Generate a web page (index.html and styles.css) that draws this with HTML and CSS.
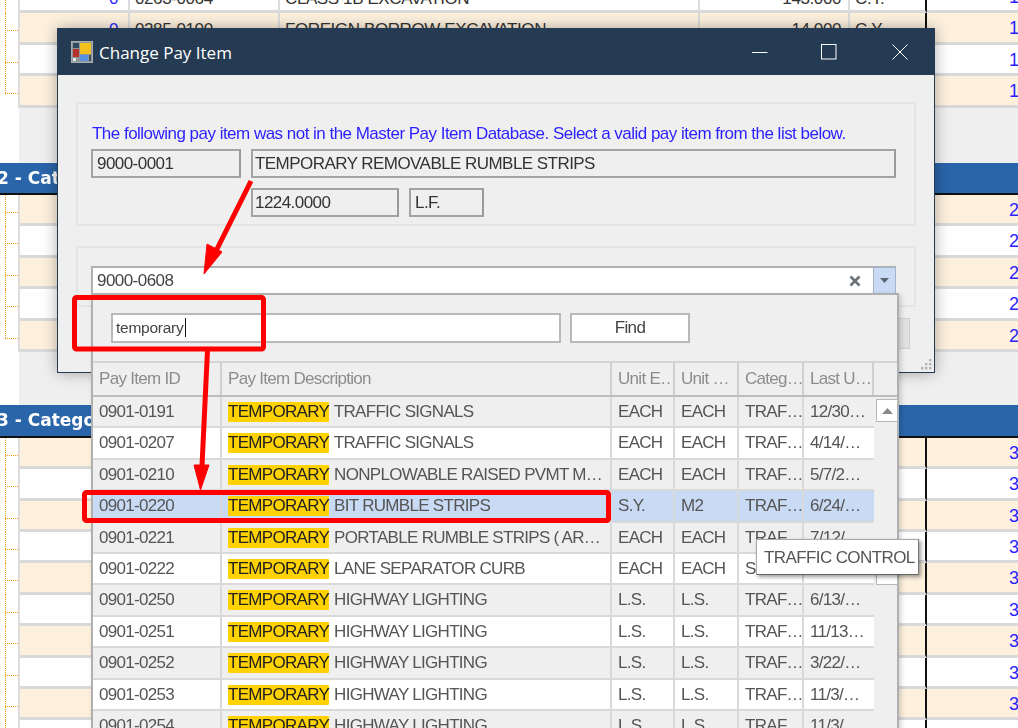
FILE: index.html
```html
<!DOCTYPE html>
<html lang="en">
<head>
<meta charset="utf-8">
<title>Change Pay Item</title>
<link rel="stylesheet" href="styles.css">
</head>
<body>
<div class="page">
  <main class="sheet">
    <section class="rows">
      <div class="row"><div class="tree"></div><div class="cell num">0</div><div class="cell">0263-0064</div><div class="cell">CLASS 1B EXCAVATION</div><div class="cell qty">143.000</div><div class="cell">C.Y.</div><div class="cell ref">1</div></div>
      <div class="row alt"><div class="tree"></div><div class="cell num">0</div><div class="cell">0285-0100</div><div class="cell">FOREIGN BORROW EXCAVATION</div><div class="cell qty">14.000</div><div class="cell">C.Y.</div><div class="cell ref">1</div></div>
      <div class="row"><div class="tree"></div><div class="cell num"></div><div class="cell"></div><div class="cell"></div><div class="cell qty"></div><div class="cell"></div><div class="cell ref">1</div></div>
      <div class="row alt"><div class="tree last"></div><div class="cell num"></div><div class="cell"></div><div class="cell"></div><div class="cell qty"></div><div class="cell"></div><div class="cell ref">1</div></div>
    </section>
    <div class="gap gap-a"></div>
    <h2 class="band band-a">2 - Category</h2>
    <section class="rows">
      <div class="row alt"><div class="tree"></div><div class="cell num"></div><div class="cell"></div><div class="cell"></div><div class="cell qty"></div><div class="cell"></div><div class="cell ref">2</div></div>
      <div class="row"><div class="tree"></div><div class="cell num"></div><div class="cell"></div><div class="cell"></div><div class="cell qty"></div><div class="cell"></div><div class="cell ref">2</div></div>
      <div class="row alt"><div class="tree"></div><div class="cell num"></div><div class="cell"></div><div class="cell"></div><div class="cell qty"></div><div class="cell"></div><div class="cell ref">2</div></div>
      <div class="row"><div class="tree"></div><div class="cell num"></div><div class="cell"></div><div class="cell"></div><div class="cell qty"></div><div class="cell"></div><div class="cell ref">2</div></div>
      <div class="row alt"><div class="tree last"></div><div class="cell num"></div><div class="cell"></div><div class="cell"></div><div class="cell qty"></div><div class="cell"></div><div class="cell ref">2</div></div>
    </section>
    <div class="gap gap-b"></div>
    <h2 class="band band-b">3 - Category</h2>
    <section class="rows">
      <div class="row alt"><div class="tree"></div><div class="cell num"></div><div class="cell"></div><div class="cell"></div><div class="cell qty"></div><div class="cell"></div><div class="cell ref">3</div></div>
      <div class="row"><div class="tree"></div><div class="cell num"></div><div class="cell"></div><div class="cell"></div><div class="cell qty"></div><div class="cell"></div><div class="cell ref">3</div></div>
      <div class="row alt"><div class="tree"></div><div class="cell num"></div><div class="cell"></div><div class="cell"></div><div class="cell qty"></div><div class="cell"></div><div class="cell ref">3</div></div>
      <div class="row"><div class="tree"></div><div class="cell num"></div><div class="cell"></div><div class="cell"></div><div class="cell qty"></div><div class="cell"></div><div class="cell ref">3</div></div>
      <div class="row alt"><div class="tree"></div><div class="cell num"></div><div class="cell"></div><div class="cell"></div><div class="cell qty"></div><div class="cell"></div><div class="cell ref">3</div></div>
      <div class="row"><div class="tree"></div><div class="cell num"></div><div class="cell"></div><div class="cell"></div><div class="cell qty"></div><div class="cell"></div><div class="cell ref">3</div></div>
      <div class="row alt"><div class="tree"></div><div class="cell num"></div><div class="cell"></div><div class="cell"></div><div class="cell qty"></div><div class="cell"></div><div class="cell ref">3</div></div>
      <div class="row"><div class="tree"></div><div class="cell num"></div><div class="cell"></div><div class="cell"></div><div class="cell qty"></div><div class="cell"></div><div class="cell ref">3</div></div>
      <div class="row alt"><div class="tree"></div><div class="cell num"></div><div class="cell"></div><div class="cell"></div><div class="cell qty"></div><div class="cell"></div><div class="cell ref">3</div></div>
      <div class="row"><div class="tree"></div><div class="cell num"></div><div class="cell"></div><div class="cell"></div><div class="cell qty"></div><div class="cell"></div><div class="cell ref">3</div></div>
    </section>
  </main>

  <div class="dialog">
    <header class="titlebar">
      <svg class="appicon" width="22" height="22" viewBox="0 0 22 22">
        <rect x="0.5" y="0.5" width="21" height="21" fill="#8f979c" stroke="#a8adb0"/>
        <rect x="2" y="2" width="6" height="5" fill="#2d4a5c"/>
        <rect x="9" y="2" width="11" height="11" fill="#f2c11c"/>
        <rect x="2" y="8" width="6" height="8" fill="#b5322c"/>
        <rect x="9" y="14" width="8" height="6" fill="#5a90e0"/>
        <rect x="2" y="17" width="3" height="3" fill="#e6e6e6"/>
        <rect x="18" y="14" width="2" height="6" fill="#3d4d58"/>
      </svg>
      <span class="wintitle">Change Pay Item</span>
      <div class="winbtn w-min"><svg width="16" height="16" viewBox="0 0 16 16"><path d="M0 8.5H15.5" stroke="#fff" fill="none"/></svg></div>
      <div class="winbtn w-max"><svg width="16" height="16" viewBox="0 0 16 16"><rect x="0.5" y="0.5" width="14.500" height="14.500" stroke="#fff" fill="none"/></svg></div>
      <div class="winbtn w-close"><svg width="16" height="16" viewBox="0 0 16 16"><path d="M0.5 0.5L15.5 15.5M15.5 0.5L0.5 15.5" stroke="#fff" fill="none"/></svg></div>
    </header>
    <div class="dlgbody">
      <fieldset class="group group-info">
        <p class="notice">The following pay item was not in the Master Pay Item Database. Select a valid pay item from the list below.</p>
        <div class="boxrow">
          <div class="box b-id">9000-0001</div>
          <div class="box b-desc">TEMPORARY REMOVABLE RUMBLE STRIPS</div>
        </div>
        <div class="boxrow boxrow-second">
          <div class="box b-qty">1224.0000</div>
          <div class="box b-unit">L.F.</div>
        </div>
      </fieldset>
      <fieldset class="group group-pick">
        <div class="combo">
          <span class="comboval">9000-0608</span>
          <svg class="clear" width="12" height="12" viewBox="0 0 12 12"><path d="M1.5 1.5L10.5 10.5M10.5 1.5L1.5 10.5" stroke="#6b7278" stroke-width="2.6" fill="none"/></svg>
          <div class="dropbtn"><svg width="9" height="5" viewBox="0 0 9 5"><path d="M0 0H9L4.5 5Z" fill="#5c6670"/></svg></div>
        </div>
      </fieldset>
      <div class="footer"><div class="okbtn"></div></div>
    </div>
    <svg class="grip" width="13" height="13" viewBox="0 0 13 13" fill="#b4b4b4">
      <rect x="10" y="1" width="2.4" height="2.4"/><rect x="6" y="5" width="2.4" height="2.4"/><rect x="10" y="5" width="2.4" height="2.4"/><rect x="2" y="9" width="2.4" height="2.4"/><rect x="6" y="9" width="2.4" height="2.4"/><rect x="10" y="9" width="2.4" height="2.4"/>
    </svg>
  </div>

  <div class="dropdown">
    <div class="searchbar">
      <div class="search">temporary<span class="caret"></span></div>
      <div class="find">Find</div>
    </div>
    <div class="grid">
      <div class="gridhead">
        <div class="gh">Pay Item ID</div><div class="gh">Pay Item Description</div><div class="gh">Unit E…</div><div class="gh">Unit …</div><div class="gh">Categ…</div><div class="gh">Last U…</div>
      </div>
      <div class="gridbody">
        <div class="gridrows">
          <div class="gr"><div class="gc">0901-0191</div><div class="gc"><mark>TEMPORARY</mark> TRAFFIC SIGNALS</div><div class="gc">EACH</div><div class="gc">EACH</div><div class="gc">TRAF…</div><div class="gc">12/30…</div></div>
          <div class="gr odd"><div class="gc">0901-0207</div><div class="gc"><mark>TEMPORARY</mark> TRAFFIC SIGNALS</div><div class="gc">EACH</div><div class="gc">EACH</div><div class="gc">TRAF…</div><div class="gc">4/14/…</div></div>
          <div class="gr"><div class="gc">0901-0210</div><div class="gc"><mark>TEMPORARY</mark> NONPLOWABLE RAISED PVMT M…</div><div class="gc">EACH</div><div class="gc">EACH</div><div class="gc">TRAF…</div><div class="gc">5/7/2…</div></div>
          <div class="gr sel"><div class="gc">0901-0220</div><div class="gc"><mark>TEMPORARY</mark> BIT RUMBLE STRIPS</div><div class="gc">S.Y.</div><div class="gc">M2</div><div class="gc">TRAF…</div><div class="gc">6/24/…</div></div>
          <div class="gr"><div class="gc">0901-0221</div><div class="gc"><mark>TEMPORARY</mark> PORTABLE RUMBLE STRIPS ( AR…</div><div class="gc">EACH</div><div class="gc">EACH</div><div class="gc">TRAF…</div><div class="gc">7/12/…</div></div>
          <div class="gr odd"><div class="gc">0901-0222</div><div class="gc"><mark>TEMPORARY</mark> LANE SEPARATOR CURB</div><div class="gc">EACH</div><div class="gc">EACH</div><div class="gc">S</div><div class="gc"></div></div>
          <div class="gr"><div class="gc">0901-0250</div><div class="gc"><mark>TEMPORARY</mark> HIGHWAY LIGHTING</div><div class="gc">L.S.</div><div class="gc">L.S.</div><div class="gc">TRAF…</div><div class="gc">6/13/…</div></div>
          <div class="gr odd"><div class="gc">0901-0251</div><div class="gc"><mark>TEMPORARY</mark> HIGHWAY LIGHTING</div><div class="gc">L.S.</div><div class="gc">L.S.</div><div class="gc">TRAF…</div><div class="gc">11/13…</div></div>
          <div class="gr"><div class="gc">0901-0252</div><div class="gc"><mark>TEMPORARY</mark> HIGHWAY LIGHTING</div><div class="gc">L.S.</div><div class="gc">L.S.</div><div class="gc">TRAF…</div><div class="gc">3/22/…</div></div>
          <div class="gr odd"><div class="gc">0901-0253</div><div class="gc"><mark>TEMPORARY</mark> HIGHWAY LIGHTING</div><div class="gc">L.S.</div><div class="gc">L.S.</div><div class="gc">TRAF…</div><div class="gc">11/3/…</div></div>
          <div class="gr"><div class="gc">0901-0254</div><div class="gc"><mark>TEMPORARY</mark> HIGHWAY LIGHTING</div><div class="gc">L.S.</div><div class="gc">L.S.</div><div class="gc">TRAF…</div><div class="gc">11/3/…</div></div>
        </div>
        <div class="scroll">
          <div class="sbtn"><svg width="11" height="6" viewBox="0 0 11 6"><path d="M0 6H11L5.5 0Z" fill="#8a8a8a"/></svg></div>
          <div class="sbtn sbtn-down"></div>
        </div>
      </div>
    </div>
  </div>

  <div class="tooltip">TRAFFIC CONTROL</div>

  <svg class="marks" width="1018" height="728" viewBox="0 0 1018 728">
    <rect x="74.5" y="297.5" width="189" height="51.5" rx="2" fill="none" stroke="#ff0000" stroke-width="5"/>
    <rect x="84.5" y="492.5" width="524" height="28" rx="2" fill="none" stroke="#ff0000" stroke-width="5"/>
    <path d="M251 181L216 251" stroke="#ff0000" stroke-width="5" fill="none"/>
    <path d="M204 274L207 244L222 252Z" fill="#ff0000" stroke="#ff0000" stroke-width="1"/>
    <path d="M207.500 350L202 466" stroke="#ff0000" stroke-width="5" fill="none"/>
    <path d="M200.500 490L194 465L209 465Z" fill="#ff0000" stroke="#ff0000" stroke-width="1"/>
  </svg>
</div>
</body>
</html>
```
FILE: styles.css
```css
* { box-sizing: border-box; }
html, body { margin: 0; padding: 0; }
body { width: 1018px; height: 728px; overflow: hidden; background: #fff; font-family: "Liberation Sans", Arial, sans-serif; }
.page { position: relative; width: 1018px; height: 728px; overflow: hidden; filter: blur(0.4px); }

/* background sheet */
.sheet { display: flex; flex-direction: column; margin-top: -18px; font-size: 17px; letter-spacing: -0.4px; color: #333; }
.rows { display: flex; flex-direction: column; }
.row { display: grid; grid-template-columns: 20px 110px 150px 420px 150px 77px 91px; height: 31.4px; background: #fff; }
.row.alt { background: #fdf1de; }
.tree { position: relative; background: #fff; border-right: 2px solid #dcdcdc; }
.tree::before { content: ""; position: absolute; left: 5px; top: 0; bottom: 0; border-left: 1px dotted #f59a10; }
.tree::after { content: ""; position: absolute; left: 5px; right: 0; top: 17px; border-top: 1px dotted #f59a10; }
.tree.last::before { bottom: 45%; }
.cell { border-right: 2px solid #dcdcdc; border-bottom: 3px solid #d9d9d9; padding: 7px 7px 0 5px; white-space: nowrap; overflow: hidden; }
.cell.num { text-align: right; color: #2a1fff; padding-right: 10px; }
.cell.qty { text-align: right; }
.cell:nth-child(6) { border-right: 2px solid #111; }
.cell.ref { border-right: 0; color: #2a1fff; padding: 5px 0 0 82px; font-size: 18px; }
.gap { background: #efefef; margin-left: 19px; }
.gap-a { height: 55.4px; }
.gap-b { height: 53px; }
.band { margin: 0; padding: 5px 0 0; text-indent: -3px; background: #2a65a9; color: #fff; font: bold 17px "DejaVu Sans", Verdana, sans-serif; letter-spacing: 0; border-bottom: 2px solid #101010; overflow: hidden; white-space: nowrap; }
.band-a { height: 32px; }
.band-b { height: 33px; }

/* dialog */
.dialog { position: absolute; left: 57px; top: 28px; width: 878px; height: 345px; background: #efefef; border: 1px solid #253b53; box-shadow: 0 0 14px rgba(0,0,0,.32); font-size: 17px; letter-spacing: -0.55px; }
.titlebar { display: flex; align-items: center; height: 46px; background: #253b53; padding-left: 13px; }
.appicon { flex: none; }
.wintitle { margin-left: 6px; color: #fff; font: 17px "Open Sans", "Noto Sans", sans-serif; letter-spacing: 0; flex: 1; }
.winbtn { display: flex; align-items: center; justify-content: center; height: 46px; }
.w-min { width: 65px; }
.w-max { width: 73px; }
.w-close { width: 69px; }
.dlgbody { padding: 27px 18px 0; }
.group { display: block; margin: 0; min-width: 0; width: 840px; border: 2px solid #e4e4e4; padding: 0 13px; }
.group-info { height: 124px; padding-top: 19px; }
.group-pick { height: 61px; margin-top: 20px; padding-top: 18px; }
.notice { margin: 0 0 5px 1px; height: 21px; color: #2a1fff; line-height: 21px; letter-spacing: -0.52px; white-space: nowrap; }
.boxrow { display: flex; gap: 10px; }
.boxrow-second { margin: 10px 0 0 160px; }
.box { height: 29px; border: 2px solid #a3a3a3; border-right-color: #9a9a9a; padding: 0 2px 0 4px; line-height: 25px; color: #333; white-space: nowrap; }
.b-id { width: 150px; }
.b-desc { width: 645px; padding-left: 2px; }
.b-qty { width: 148px; padding-left: 2px; }
.b-unit { width: 75px; }
.combo { display: flex; align-items: center; width: 805px; height: 29px; background: #fff; border: 2px solid #b0b0b0; border-right: 0; }
.comboval { flex: 1; padding-left: 4px; color: #444; }
.clear { margin-right: 12px; }
.dropbtn { display: flex; align-items: center; justify-content: center; width: 23px; height: 27px; background: #c9daf5; border: 1px solid #a7b4c8; }
.footer { display: flex; justify-content: flex-end; padding: 11px 6px 0 0; }
.okbtn { width: 100px; height: 31px; background: #e1e1e1; border: 1px solid #cfcfcf; }
.grip { position: absolute; right: 2px; bottom: 1px; }

/* dropdown */
.dropdown { position: absolute; left: 91px; top: 293px; width: 808px; height: 460px; background: #efefef; border: 2px solid #b0b0b0; box-shadow: 2px 2px 5px rgba(0,0,0,.18); color: #555; font-size: 17px; letter-spacing: -0.7px; }
.searchbar { display: flex; gap: 9px; height: 66px; padding: 18px 0 0 18px; }
.search { width: 450px; height: 30px; background: #fff; border: 2px solid #b8b8b8; padding-left: 3px; line-height: 25px; font-size: 15.5px; letter-spacing: -0.25px; color: #444; white-space: nowrap; }
.caret { display: inline-block; width: 1px; height: 19px; margin-left: 1px; background: #111; vertical-align: -4px; }
.find { width: 120px; height: 30px; background: #fff; border: 2px solid #b8b8b8; text-align: center; line-height: 25px; color: #444; }
.gridhead { display: grid; grid-template-columns: 129px 390px 63px 64px 65px 70px 23px; height: 36px; border-top: 2px solid #d4d4d4; border-bottom: 2px solid #bdbdbd; }
.gh { padding: 6px 0 0 6px; color: #8c8c8c; border-right: 2px solid #cfcfcf; white-space: nowrap; overflow: hidden; }
.gridbody { display: flex; }
.gridrows { width: 781px; display: flex; flex-direction: column; }
.gr { display: grid; grid-template-columns: 129px 390px 63px 64px 65px 70px; height: 31.4px; flex: none; }
.gr.odd { background: #fff; }
.gr.sel { background: #c9daf5; }
.gc { padding: 5px 0 0 6px; border-right: 2px solid #d9d9d9; border-bottom: 2px solid #d9d9d9; white-space: nowrap; overflow: hidden; }
.gc:last-child { border-right: 0; }
mark { display: inline-block; height: 20px; line-height: 20px; margin-right: 1px; background: #ffd200; color: #222; border-radius: 1px; }
.scroll { display: flex; flex-direction: column; padding: 2px 0 0 2px; }
.sbtn { display: flex; align-items: center; justify-content: center; width: 22px; height: 23px; background: #fff; border: 1px solid #b8b8b8; }
.sbtn-down { margin-top: 135px; height: 28px; }

.tooltip { position: absolute; left: 756px; top: 539px; width: 163px; height: 36px; background: #fff; border: 1px solid #a8a8a8; border-right-color: #777; border-bottom-color: #666; box-shadow: 2px 2px 4px rgba(0,0,0,.4); padding: 8px 0 0 7px; color: #555; font-size: 17px; letter-spacing: -0.6px; white-space: nowrap; }
.marks { position: absolute; left: 0; top: 0; pointer-events: none; }
```
